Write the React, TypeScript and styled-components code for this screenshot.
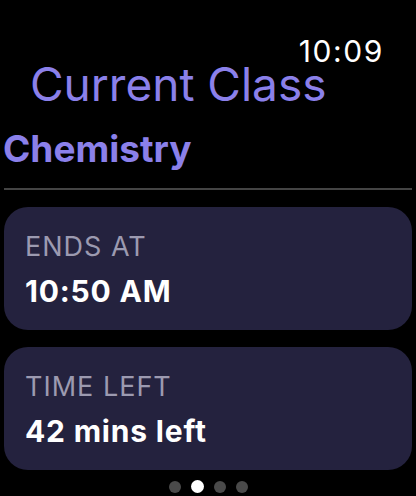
import React from 'react';
import styled, { createGlobalStyle } from 'styled-components';

const GlobalStyle = createGlobalStyle`
  html, body {
    margin: 0;
    padding: 0;
    background: #000;
  }
  body {
    font-family: Inter, 'Noto Sans', sans-serif;
    -webkit-font-smoothing: antialiased;
  }
`;

const Screen = styled.div`
  width: 416px;
  height: 496px;
  background: #000;
  overflow: hidden;
  display: flex;
  flex-direction: column;
`;

const StatusBar = styled.div`
  display: flex;
  justify-content: flex-end;
  padding: 37px 32px 0 0;
`;

const Clock = styled.span`
  color: #fff;
  font-size: 30px;
  line-height: 28px;
  font-weight: 400;
  letter-spacing: 1.6px;
`;

const NavTitle = styled.h1`
  margin: 0 0 0 30px;
  color: #8b80ea;
  font-size: 46px;
  line-height: 38px;
  font-weight: 400;
`;

const ClassName = styled.h2`
  margin: 27px 0 0 3px;
  color: #8b80ea;
  font-size: 37px;
  line-height: 1;
  font-weight: 700;
`;

const Divider = styled.hr`
  margin: 21px 4px 0;
  border: none;
  height: 2px;
  background: #444;
`;

const Cards = styled.div`
  display: flex;
  flex-direction: column;
  gap: 17px;
  margin: 17px 4px 0 4px;
`;

const Card = styled.div`
  height: 123px;
  box-sizing: border-box;
  background: #24223e;
  border-radius: 24px;
  padding: 26px 21px 0;
  display: flex;
  flex-direction: column;
  gap: 16px;
`;

const Label = styled.span`
  color: #9c9ab0;
  font-size: 27px;
  line-height: 1;
  font-weight: 400;
  letter-spacing: 1px;
`;

const Value = styled.span`
  color: #fff;
  font-size: 30px;
  line-height: 1;
  font-weight: 700;
  letter-spacing: 0.8px;
`;

const Pager = styled.div`
  display: flex;
  justify-content: center;
  align-items: center;
  gap: 10px;
  margin-top: 10px;
`;

const Dot = styled.span<{ active?: boolean }>`
  width: ${(p) => (p.active ? '13px' : '12px')};
  height: ${(p) => (p.active ? '13px' : '12px')};
  border-radius: 50%;
  background: ${(p) => (p.active ? '#fff' : '#4a4a4a')};
`;

const rows = [
  { label: 'ENDS AT', value: '10:50 AM' },
  { label: 'TIME LEFT', value: '42 mins left' },
];

const App = () => {
  return (
    <>
      <GlobalStyle />
      <Screen>
        <StatusBar>
          <Clock>10:09</Clock>
        </StatusBar>
        <NavTitle>Current Class</NavTitle>
        <ClassName>Chemistry</ClassName>
        <Divider />
        <Cards>
          {rows.map((r) => (
            <Card key={r.label}>
              <Label>{r.label}</Label>
              <Value>{r.value}</Value>
            </Card>
          ))}
        </Cards>
        <Pager>
          {[0, 1, 2, 3].map((i) => (
            <Dot key={i} active={i === 1} />
          ))}
        </Pager>
      </Screen>
    </>
  );
};

export default App;
